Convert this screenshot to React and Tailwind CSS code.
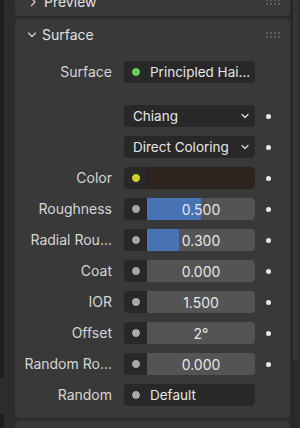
const font = "font-['Inter','Noto_Sans',sans-serif]";

function Grip() {
  return (
    <div className="grid grid-cols-4 gap-[2px]">
      {Array.from({ length: 8 }).map((_, i) => (
        <span key={i} className="w-[2px] h-[2px] bg-[#5e5e5e]" />
      ))}
    </div>
  );
}

function Socket({ color }) {
  return (
    <div className="w-[23px] h-full flex items-center justify-center shrink-0">
      <span
        className="w-[10px] h-[10px] rounded-full border border-[#1c1c1c]"
        style={{ background: color }}
      />
    </div>
  );
}

function Dot() {
  return <span className="ml-[11px] w-[5px] h-[5px] rounded-full bg-[#e8e8e8]" />;
}

function Row({ label, children, dot = true, className = "" }) {
  return (
    <div className={`flex items-center h-[22px] ${className}`}>
      <div className="w-[97px] text-right text-[14px] text-[#d6d6d6] leading-none whitespace-nowrap">
        {label}
      </div>
      <div className="ml-[12px] w-[131px] h-full rounded-[4px] overflow-hidden flex">
        {children}
      </div>
      {dot && <Dot />}
    </div>
  );
}

function Slider({ value, fill }) {
  return (
    <>
      <div className="bg-[#282828] h-full">
        <Socket color="#a8a8a8" />
      </div>
      <div className="relative flex-1 h-full bg-[#545454]">
        {fill > 0 && (
          <div
            className="absolute left-0 top-0 h-full bg-[#4772b3]"
            style={{ width: `${fill * 100}%` }}
          />
        )}
        <div className="relative h-full flex items-center justify-center text-[14px] text-[#e6e6e6]">
          {value}
        </div>
      </div>
    </>
  );
}

function Dropdown({ text }) {
  return (
    <div className="flex-1 h-full bg-[#282828] flex items-center pl-[9px] pr-[6px] text-[13.5px] text-[#e6e6e6]">
      <span className="flex-1 whitespace-nowrap">{text}</span>
      <svg width="8" height="6" viewBox="0 0 8 6" fill="none">
        <path d="M1 1.5 L4 4.5 L7 1.5" stroke="#d8d8d8" strokeWidth="1.3" strokeLinecap="round" strokeLinejoin="round" />
      </svg>
    </div>
  );
}

export default function App() {
  return (
    <div className={`w-[300px] h-[428px] bg-[#2c2c2c] flex overflow-hidden ${font}`}>
      <div className="w-[4px] h-full flex flex-col">
        <div className="h-[378px] bg-[#1e1e1e]" />
        <div className="h-[36px] bg-[#2c2c2c]" />
        <div className="flex-1 bg-[#1e1e1e]" />
      </div>
      <div className="ml-[11px] w-[275px] flex flex-col">
        {/* Preview (collapsed, scrolled off the top) */}
        <div className="mt-[-13px] h-[29px] bg-[#393939] rounded-b-[5px] flex items-center pl-[13px] pr-[10px] shrink-0">
          <svg width="8" height="10" viewBox="0 0 8 10" fill="none" className="ml-[1px]">
            <path d="M2.5 1.5 L6 5 L2.5 8.5" stroke="#cfcfcf" strokeWidth="1.3" strokeLinecap="round" strokeLinejoin="round" />
          </svg>
          <span className="ml-[7px] text-[14px] text-[#e0e0e0] flex-1">Preview</span>
          <Grip />
        </div>

        {/* Surface panel */}
        <div className="mt-[3px] h-[399px] bg-[#393939] rounded-[5px] flex flex-col shrink-0">
          <div className="h-[31px] flex items-center pl-[12px] pr-[10px]">
            <svg width="10" height="8" viewBox="0 0 10 8" fill="none">
              <path d="M1.5 2 L5 5.5 L8.5 2" stroke="#cfcfcf" strokeWidth="1.3" strokeLinecap="round" strokeLinejoin="round" />
            </svg>
            <span className="ml-[5px] text-[14px] text-[#e0e0e0] flex-1">Surface</span>
            <Grip />
          </div>

          <div className="pt-[11px] flex flex-col gap-[9px]">
            <Row label="Surface" dot={false} className="mb-[13px]">
              <div className="flex-1 h-full bg-[#282828] flex items-center text-[13.5px] text-[#e6e6e6]">
                <Socket color="#5fcf5f" />
                <span className="ml-[3px] whitespace-nowrap">Principled Hai...</span>
              </div>
            </Row>
            <Row label="">
              <Dropdown text="Chiang" />
            </Row>
            <Row label="">
              <Dropdown text="Direct Coloring" />
            </Row>
            <Row label="Color">
              <div className="bg-[#282828] h-full">
                <Socket color="#d1d12a" />
              </div>
              <div className="flex-1 h-full bg-[#2e241f]" />
            </Row>
            <Row label="Roughness">
              <Slider value="0.500" fill={0.5} />
            </Row>
            <Row label="Radial Rou...">
              <Slider value="0.300" fill={0.3} />
            </Row>
            <Row label="Coat">
              <Slider value="0.000" fill={0} />
            </Row>
            <Row label="IOR">
              <Slider value="1.500" fill={0} />
            </Row>
            <Row label="Offset">
              <Slider value="2°" fill={0} />
            </Row>
            <Row label="Random Ro...">
              <Slider value="0.000" fill={0} />
            </Row>
            <Row label="Random" dot={false}>
              <div className="flex-1 h-full bg-[#282828] flex items-center text-[13.5px] text-[#e6e6e6]">
                <Socket color="#a8a8a8" />
                <span className="ml-[3px]">Default</span>
              </div>
            </Row>
          </div>
        </div>

        <div className="mt-[3px] h-[30px] bg-[#393939] rounded-t-[5px] shrink-0" />
      </div>

      {/* scrollbar region */}
      <div className="ml-[1px] w-[2px] h-full bg-[#262626]" />
      <div className="w-[6px] h-full flex flex-col">
        <div className="h-[360px] bg-[#353535]" />
        <div className="flex-1 bg-[#2a2a2a]" />
      </div>
      <div className="w-[1px] h-full bg-[#2c2c2c]" />
    </div>
  );
}
